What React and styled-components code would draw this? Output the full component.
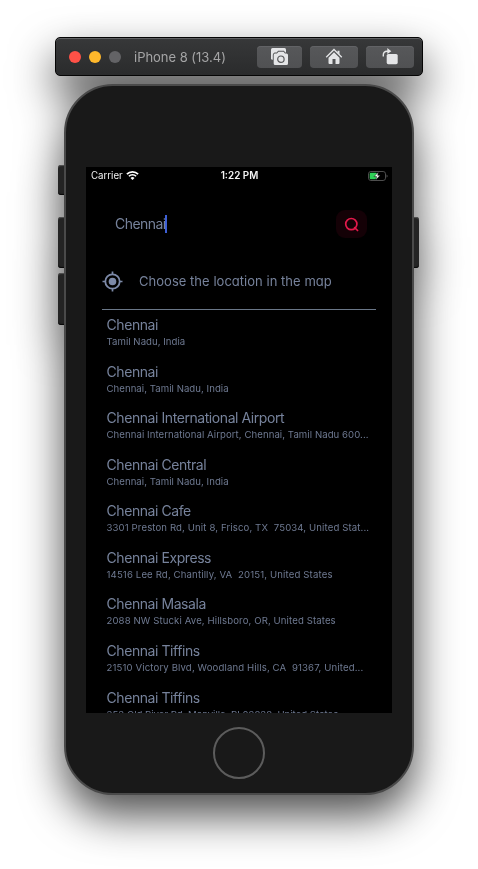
import React from "react";
import styled, { createGlobalStyle } from "styled-components";

const GlobalStyle = createGlobalStyle`
  * { box-sizing: border-box; }
  body {
    margin: 0;
    background: #fff;
    font-family: Inter, "Liberation Sans", sans-serif;
    overflow: hidden;
  }
`;

const Page = styled.main`
  height: 869px;
  width: 478px;
  padding: 37px 55px 0;
  overflow: hidden;
`;

const Simulator = styled.div`
  width: 368px;
  display: flex;
  flex-direction: column;
  align-items: center;
  gap: 8px;
  filter: drop-shadow(0 20px 22px rgba(0, 0, 0, 0.7));
`;

const Toolbar = styled.header`
  width: 368px;
  height: 39px;
  display: flex;
  align-items: center;
  padding: 0 8px 0 13px;
  border: 1px solid #050505;
  border-radius: 5px;
  background: linear-gradient(#373839, #2a2b2c);
  box-shadow: inset 0 1px 0 #606163;
`;

const Lights = styled.div`
  display: flex;
  gap: 8px;
`;

const Light = styled.span`
  width: 12px;
  height: 12px;
  border-radius: 50%;
  background: ${(p) => p.$color};
`;

const WindowTitle = styled.h1`
  margin: 0 auto 0 13px;
  font-size: 13px;
  font-weight: 400;
  letter-spacing: -0.02px;
  color: #a5a5a6;
  white-space: nowrap;
`;

const Tools = styled.div`
  display: flex;
  gap: 8px;
`;

const Tool = styled.button`
  width: ${(p) => p.$width}px;
  height: 22px;
  padding: 0;
  border: 0;
  border-radius: 4px;
  display: flex;
  align-items: center;
  justify-content: center;
  background: linear-gradient(#57585a, #505153);
  box-shadow: inset 0 1px 0 #626366;
`;

const Phone = styled.section`
  position: relative;
  width: 350px;
  height: 711px;
  padding: 81px 0 0;
  display: flex;
  flex-direction: column;
  align-items: center;
  border: 2px solid #4a4a4a;
  border-radius: 49px;
  background: #191919;
`;

const SideKey = styled.span`
  position: absolute;
  z-index: -1;
  ${(p) => (p.$side === "left" ? "left: -8px;" : "right: -6.5px;")}
  top: ${(p) => p.$top}px;
  width: 10px;
  height: ${(p) => p.$height}px;
  border-radius: 3px;
  background: #242424;
  box-shadow: inset 0 1px 1px #555, inset 0 -1px 1px #050505;
`;

const Screen = styled.div`
  width: 306px;
  height: 546px;
  flex-shrink: 0;
  overflow: hidden;
  background: #000;
  color: #76829b;
`;

const StatusBar = styled.div`
  height: 17px;
  padding: 0 4px 0 5px;
  display: grid;
  grid-template-columns: 1fr auto 1fr;
  align-items: center;
  color: #f4f4f4;
  font-size: 9.7px;
  line-height: 17px;
`;

const Carrier = styled.div`
  display: flex;
  align-items: center;
  gap: 3.5px;
`;

const Clock = styled.time`
  font-weight: 600;
  font-size: 9.9px;
`;

const BatterySlot = styled.div`
  display: flex;
  justify-content: flex-end;
`;

const SearchRow = styled.div`
  margin: 26px 25px 0 29px;
  height: 28px;
  display: flex;
  align-items: center;
  justify-content: space-between;
`;

const Query = styled.div`
  display: flex;
  align-items: center;
  font-size: 14px;
  line-height: 18px;
  letter-spacing: -0.55px;
`;

const Caret = styled.span`
  width: 2px;
  height: 18px;
  margin-left: -1px;
  background: #3d5fd6;
`;

const SearchButton = styled.button`
  width: 31px;
  height: 28px;
  padding: 0;
  border: 0;
  border-radius: 9px;
  display: flex;
  align-items: center;
  justify-content: center;
  background: #140106;
`;

const MapChoice = styled.div`
  margin: 28px 16px 0;
  height: 44px;
  padding-bottom: 13px;
  display: flex;
  align-items: center;
  gap: 16px;
  border-bottom: 1px solid #6a7788;
  font-size: 13px;
  letter-spacing: 0.03px;
  font-feature-settings: "cv11";
  white-space: nowrap;
`;

const Results = styled.ul`
  margin: 0;
  padding: 0 16px 0 20.5px;
  list-style: none;
`;

const Result = styled.li`
  height: 46.57px;
  padding-top: 6px;
`;

const Name = styled.div`
  font-size: 14px;
  line-height: 18px;
  letter-spacing: -0.43px;
  white-space: nowrap;
`;

const Address = styled.div`
  font-size: 9.6px;
  line-height: 15px;
  letter-spacing: ${(p) => p.$tracking}px;
  white-space: pre;
  color: #6e7991;
`;

const HomeButton = styled.div`
  width: 52px;
  height: 52px;
  margin-top: 14px;
  border: 2.5px solid #5c5c5c;
  border-radius: 50%;
`;

const CameraIcon = () => (
  <svg width="17" height="17" viewBox="0 0 17 17">
    <rect x="0" y="0" width="15" height="11.800" rx="1.500" fill="#e4e5e7" />
    <path
      d="M4 5.500h2L7.500 3.700h5L14 5.500h1.500A1.500 1.500 0 0 1 17 7v8.500a1.500 1.500 0 0 1-1.500 1.500H4.200a1.500 1.500 0 0 1-1.500-1.500V7A1.400 1.400 0 0 1 4 5.500z"
      fill="#e4e5e7"
      stroke="#545557"
      strokeWidth="1.800"
      paintOrder="stroke"
    />
    <circle cx="9.900" cy="11.200" r="3.200" fill="none" stroke="#555658" strokeWidth="1.200" />
  </svg>
);

const HouseIcon = () => (
  <svg width="18" height="17" viewBox="0 0 18 17">
    <path d="M1.200 9.300L9 1.500l7.800 7.800" fill="none" stroke="#e4e5e7" strokeWidth="1.300" />
    <path d="M12.500 2.800h2v4l-2-2z" fill="#e4e5e7" />
    <path d="M9 4.200l5.500 5.500v5.300a1 1 0 0 1-1 1h-3v-5h-3v5h-3a1 1 0 0 1-1-1V9.700z" fill="#e4e5e7" />
  </svg>
);

const RotateIcon = () => (
  <svg width="17" height="17" viewBox="0 0 17 17">
    <path d="M1.300 8.500V7a3.800 3.800 0 0 1 3.700-3.700h1" fill="none" stroke="#e4e5e7" strokeWidth="1.400" />
    <path d="M5.300 0L9.300 3.200 5.300 6z" fill="#e4e5e7" />
    <rect x="4.700" y="6" width="11" height="10.200" rx="1.600" fill="#e4e5e7" />
  </svg>
);

const WifiIcon = () => (
  <svg width="13" height="9" viewBox="0 0 13 9" fill="none" stroke="#fff">
    <path d="M.900 3.200a8 8 0 0 1 11.200 0" strokeWidth="1.800" />
    <path d="M2.900 5.300a5.100 5.100 0 0 1 7.200 0" strokeWidth="1.600" />
    <path d="M6.500 9L4.500 7a2.900 2.900 0 0 1 4 0z" fill="#fff" stroke="none" />
  </svg>
);

const BatteryIcon = () => (
  <svg width="20" height="10" viewBox="0 0 20 10">
    <rect x=".5" y=".5" width="17" height="9" rx="2.400" fill="none" stroke="#4d4d4d" />
    <path d="M18.500 3.500v3q1.200-.5 1.200-1.500t-1.200-1.500z" fill="#4d4d4d" />
    <rect x="1.700" y="1.700" width="7.300" height="6.600" rx="1.200" fill="#2fd158" />
    <path d="M10.500 1L6 5.600h2.600L7.800 9l4.400-4.700H9.700z" fill="#fff" stroke="#000" strokeWidth=".5" />
  </svg>
);

const SearchIcon = () => (
  <svg width="15" height="15" viewBox="0 0 15 15" fill="none" stroke="#e3194b" strokeWidth="1.700" strokeLinecap="round">
    <circle cx="7.300" cy="7.100" r="5.600" />
    <path d="M10.600 10.600l3 2.900" />
  </svg>
);

const TargetIcon = () => (
  <svg width="21" height="21" viewBox="0 0 21 21" fill="none" stroke="#7d8aa8">
    <circle cx="10.500" cy="10.500" r="7.200" strokeWidth="1.800" />
    <circle cx="10.500" cy="10.500" r="3.800" fill="#7d8aa8" stroke="none" />
    <path d="M10.500.500v3M10.500 17.500v3M.500 10.500h3M17.500 10.500h3" strokeWidth="1.700" />
  </svg>
);

const places = [
  ["Chennai", "Tamil Nadu, India", 0.04],
  ["Chennai", "Chennai, Tamil Nadu, India", 0.05],
  ["Chennai International Airport", "Chennai International Airport, Chennai, Tamil Nadu 600...", 0.07],
  ["Chennai Central", "Chennai, Tamil Nadu, India", 0.05],
  ["Chennai Cafe", "3301 Preston Rd, Unit 8, Frisco, TX  75034, United Stat...", 0.12],
  ["Chennai Express", "14516 Lee Rd, Chantilly, VA  20151, United States", 0.14],
  ["Chennai Masala", "2088 NW Stucki Ave, Hillsboro, OR, United States", 0.11],
  ["Chennai Tiffins", "21510 Victory Blvd, Woodland Hills, CA  91367, United...", 0.13],
  ["Chennai Tiffins", "353 Old River Rd, Manville, RI 02838, United States", 0],
];

export default function App() {
  return (
    <Page>
      <GlobalStyle />
      <Simulator>
        <Toolbar>
          <Lights>
            <Light $color="#ff5147" />
            <Light $color="#ffb82b" />
            <Light $color="#636366" />
          </Lights>
          <WindowTitle>iPhone 8 (13.4)</WindowTitle>
          <Tools>
            <Tool $width={45} aria-label="Screenshot"><CameraIcon /></Tool>
            <Tool $width={48} aria-label="Home"><HouseIcon /></Tool>
            <Tool $width={48} aria-label="Rotate"><RotateIcon /></Tool>
          </Tools>
        </Toolbar>
        <Phone>
          <SideKey $side="left" $top={79} $height={30} />
          <SideKey $side="left" $top={131} $height={51} />
          <SideKey $side="left" $top={187} $height={52} />
          <SideKey $side="right" $top={131} $height={51} />
          <Screen>
            <StatusBar>
              <Carrier>Carrier<WifiIcon /></Carrier>
              <Clock>1:22 PM</Clock>
              <BatterySlot><BatteryIcon /></BatterySlot>
            </StatusBar>
            <SearchRow>
              <Query>Chennai<Caret /></Query>
              <SearchButton aria-label="Search"><SearchIcon /></SearchButton>
            </SearchRow>
            <MapChoice>
              <TargetIcon />
              <span>Choose the location in the map</span>
            </MapChoice>
            <Results>
              {places.map(([name, address, tracking], i) => (
                <Result key={i}>
                  <Name>{name}</Name>
                  <Address $tracking={tracking}>{address}</Address>
                </Result>
              ))}
            </Results>
          </Screen>
          <HomeButton />
        </Phone>
      </Simulator>
    </Page>
  );
}
